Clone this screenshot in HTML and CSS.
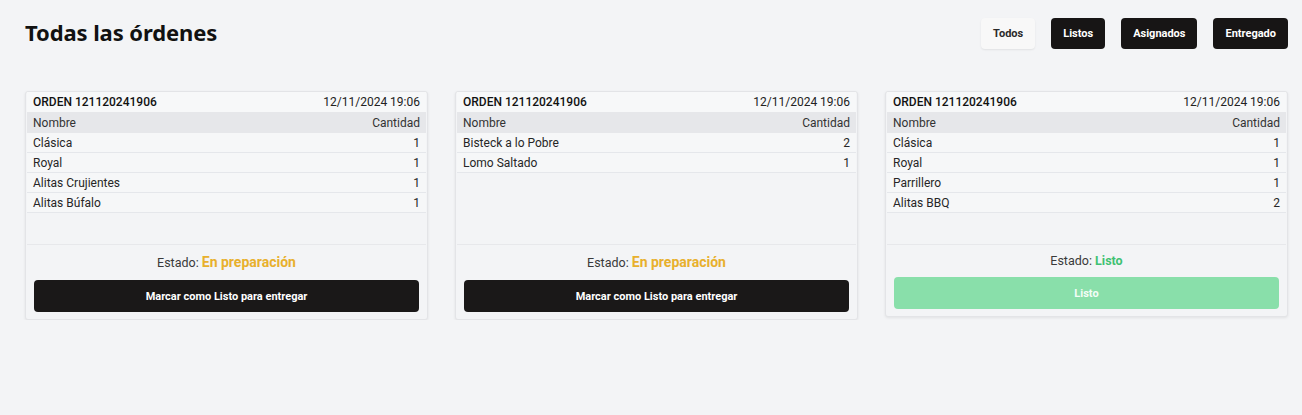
FILE: index.html
```html
<!DOCTYPE html>
<html lang="es">
<head>
<meta charset="utf-8">
<title>Todas las órdenes</title>
<link rel="stylesheet" href="styles.css">
</head>
<body>
<main class="page">
  <header class="topbar">
    <h1 class="title">Todas las órdenes</h1>
    <nav class="filters">
      <button class="filter filter-light">Todos</button>
      <button class="filter">Listos</button>
      <button class="filter">Asignados</button>
      <button class="filter">Entregado</button>
    </nav>
  </header>

  <section class="grid">
    <article class="card">
      <div class="card-head"><span class="order-id">ORDEN 121120241906</span><span class="date">12/11/2024 19:06</span></div>
      <div class="card-body">
        <div class="row row-head"><span>Nombre</span><span>Cantidad</span></div>
        <div class="row"><span>Clásica</span><span>1</span></div>
        <div class="row"><span>Royal</span><span>1</span></div>
        <div class="row"><span>Alitas Crujientes</span><span>1</span></div>
        <div class="row"><span>Alitas Búfalo</span><span>1</span></div>
      </div>
      <div class="card-foot">
        <p class="status">Estado: <span class="status-prep">En preparación</span></p>
        <button class="action">Marcar como Listo para entregar</button>
      </div>
    </article>

    <article class="card">
      <div class="card-head"><span class="order-id">ORDEN 121120241906</span><span class="date">12/11/2024 19:06</span></div>
      <div class="card-body">
        <div class="row row-head"><span>Nombre</span><span>Cantidad</span></div>
        <div class="row"><span>Bisteck a lo Pobre</span><span>2</span></div>
        <div class="row"><span>Lomo Saltado</span><span>1</span></div>
      </div>
      <div class="card-foot">
        <p class="status">Estado: <span class="status-prep">En preparación</span></p>
        <button class="action">Marcar como Listo para entregar</button>
      </div>
    </article>

    <article class="card">
      <div class="card-head"><span class="order-id">ORDEN 121120241906</span><span class="date">12/11/2024 19:06</span></div>
      <div class="card-body">
        <div class="row row-head"><span>Nombre</span><span>Cantidad</span></div>
        <div class="row"><span>Clásica</span><span>1</span></div>
        <div class="row"><span>Royal</span><span>1</span></div>
        <div class="row"><span>Parrillero</span><span>1</span></div>
        <div class="row"><span>Alitas BBQ</span><span>2</span></div>
      </div>
      <div class="card-foot">
        <p class="status">Estado: <span class="status-ready">Listo</span></p>
        <button class="action action-done">Listo</button>
      </div>
    </article>
  </section>
</main>
</body>
</html>
```

FILE: styles.css
```css
* { box-sizing: border-box; }

html, body {
  margin: 0;
  background: #f3f4f6;
  font-family: Roboto, "Noto Sans", sans-serif;
  color: #1f2937;
}

.page {
  padding: 18px 14px 0 25px;
}

.topbar {
  display: flex;
  justify-content: space-between;
  align-items: flex-start;
  height: 31px;
}

.title {
  margin: 0;
  font-family: "Noto Sans", sans-serif;
  font-size: 22px;
  line-height: 28px;
  font-weight: 700;
  color: #111111;
  letter-spacing: -0.1px;
}

.filters {
  display: flex;
  gap: 16px;
}

.filter {
  height: 31px;
  padding: 0 12px;
  border: none;
  border-radius: 4px;
  background: #171515;
  color: #ffffff;
  font-family: inherit;
  font-size: 11px;
  font-weight: 700;
  cursor: pointer;
}

.filter-light {
  background: #f8f8f8;
  color: #2a2a2a;
  box-shadow: 0 1px 2px rgba(0, 0, 0, 0.08);
}

.grid {
  display: grid;
  grid-template-columns: repeat(3, 1fr);
  align-items: start;
  gap: 27px;
  margin-top: 42px;
}

.card {
  border: 1px solid #e3e4e7;
  border-radius: 3px;
  background: #f3f4f6;
  box-shadow: 0 1px 3px rgba(0, 0, 0, 0.08);
  padding: 0 1px;
  display: flex;
  flex-direction: column;
  font-size: 12px;
}

.card-head {
  display: flex;
  justify-content: space-between;
  align-items: center;
  height: 20px;
  padding: 0 6px;
  background: #f7f8f9;
}

.order-id { font-weight: 500; color: #111111; }
.date { color: #222222; }

.card-body {
  height: 133px;
  border-bottom: 1px solid #e7e8eb;
}

.row {
  display: flex;
  justify-content: space-between;
  align-items: center;
  height: 20px;
  padding: 0 6px;
  background: #f6f7f8;
  border-bottom: 1px solid #e5e7eb;
  color: #262626;
}

.row-head {
  height: 21px;
  background: #e6e7ea;
  border-bottom: none;
  color: #333333;
}

.card-foot {
  padding: 8px 7px 7px;
  display: flex;
  flex-direction: column;
  align-items: stretch;
}

.status {
  margin: 0 0 8px;
  text-align: center;
  font-size: 12.5px;
  line-height: 16px;
  color: #3a3a3a;
}

.status-prep {
  color: #e8b02d;
  font-weight: 700;
  font-size: 14px;
  line-height: 19px;
}

.status-ready {
  color: #3fc173;
  font-weight: 700;
}

.action {
  height: 32px;
  border: none;
  border-radius: 4px;
  background: #1a1818;
  color: #ffffff;
  font-family: inherit;
  font-size: 11px;
  font-weight: 700;
  cursor: pointer;
}

.action-done {
  background: #89dfaa;
  color: #f4fdf7;
}
```
